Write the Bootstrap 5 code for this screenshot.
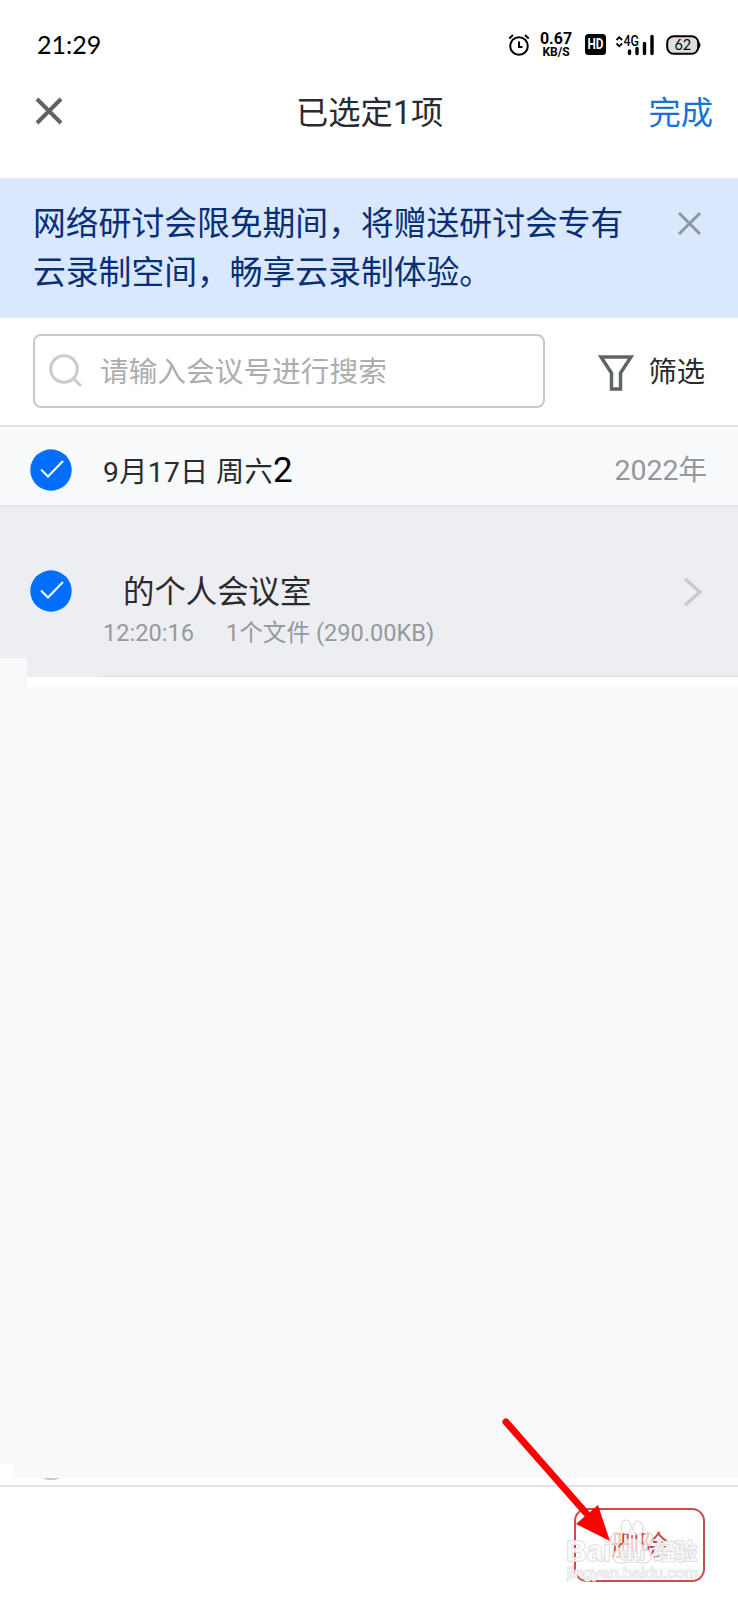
<!DOCTYPE html>
<html lang="zh-CN">
<head>
<meta charset="utf-8">
<meta name="viewport" content="width=device-width, initial-scale=1">
<title>已选定1项</title>
<link href="https://cdn.jsdelivr.net/npm/bootstrap@5.3.0/dist/css/bootstrap.min.css" rel="stylesheet">
<style>
body{font-family:Roboto,"Noto Sans CJK SC",sans-serif;font-weight:400;color:#2a2b2e;background:#fff}
svg{display:block;flex-shrink:0}
.screen{height:1600px;overflow:hidden}
.statusbar{height:90px;padding:0 36px 0 37px;color:#000}
.clock{font-family:Lato,sans-serif;font-size:25px;line-height:30px;margin-top:-2px}
.rate{font-weight:700;width:36px}
.rate-num{font-size:16px;line-height:14px}
.rate-unit{font-size:12px;line-height:12px}
.hd-mark{margin-left:11px}
.signal{margin-left:9px}
.battery{margin-left:11px}
.titlebar{height:88px;padding:0 25px 42px 35px;font-size:32.3px;line-height:46px}
.title-text{margin-left:28px;padding-top:1px}
.done{color:#1473d4}
.close-main{margin-top:-4px}
.notice{height:140px;background:#d9e8fc;color:#062f78;padding:22px 24px 0 33px;font-size:32.8px;line-height:49px}
.close-note{margin:11px 12px 0 0}
.searchrow{height:109px;padding:16px 33px 0 33px;border-bottom:2px solid #dfe1e5}
.searchbox{width:512px;height:74px;border:2px solid #c9c9c9;border-radius:8px;padding:0 14px;color:#adadad;font-size:28.7px;line-height:40px}
.searchbox span{margin-left:16px;padding-top:2px}
.filter{font-size:28.3px;line-height:40px;height:74px;padding-top:4px}
.filter span{margin-left:14px}
.daterow{height:80px;background:#f8f9fb;border-bottom:2px solid #e2e4e8;padding:13px 31px 0 30px;font-size:28.2px;line-height:40px}
.tick{margin-top:-4px}
.row-text{margin-left:30px}
.date-text{margin-left:31px;letter-spacing:.35px;padding-top:1px}
.year{font-size:28.5px;color:#95979b;margin-top:-3px}
.extra{font-size:35px;line-height:36px;color:#000}
.item{height:170px;background:#edeef2}
.item-body{height:169px;padding:63px 35px 0 30px}
.item-title{font-size:31.4px;line-height:46px;padding-left:21px}
.item-sub{font-size:23.6px;line-height:35px;color:#96989d;gap:32px;padding-left:1px}
.item-rule{height:1px;margin-left:102px;background:#d9dadd}
.chevron{margin-top:7px}
.edge-patch{left:0;top:151px;width:27px;height:29px;background:#f8f9fb}
.gapstrip{height:10px}
.emptyarea{height:792px;background:#f8f9fb}
.corner{width:13px;height:14px;background:#fff}
.peek{height:7px;padding-left:41px}
.footbar{border-top:2px solid #dfe2e7;padding:21px 33px 0 0;height:115px}
.delete{width:131px;height:74px;border:2px solid #cf4b48;border-radius:13px;color:#cf4440;font-size:28.5px;line-height:40px;background:#fff}
.delete span{display:block;padding-top:4px}
.arrow{left:496px;top:1412px}
.stamp{left:560px;top:1508px}
.stamp text{font-family:"Liberation Sans","Noto Sans CJK SC",sans-serif;font-weight:700;fill:#fff;fill-opacity:.72;stroke:#dcdcdc;stroke-width:1.6;paint-order:stroke}
.stamp .site{font-weight:400;stroke-width:1.2}
</style>
</head>
<body>
<div class="screen position-relative d-flex flex-column">
  <header class="statusbar d-flex align-items-center justify-content-between">
    <div class="clock">21:29</div>
    <div class="d-flex align-items-center">
      <svg width="22" height="24" viewBox="0 0 22 24" fill="none" stroke="#000" stroke-width="2"><circle cx="11" cy="13" r="8.8"/><path d="M1.300 5.500 5 2M20.700 5.500 17 2M11 8.500V14h3.500"/></svg>
      <div class="rate text-center ms-2"><div class="rate-num">0.67</div><div class="rate-unit">KB/S</div></div>
      <svg class="hd-mark" width="21" height="21" viewBox="0 0 21 21"><rect width="21" height="21" rx="3.5"/><text x="10.5" y="15.4" text-anchor="middle" textLength="16" lengthAdjust="spacingAndGlyphs" font-size="14" font-weight="700" fill="#fff">HD</text></svg>
      <svg class="signal" width="40" height="22" viewBox="0 0 40 22"><path d="M1.500 6 4.300 3.200 7.100 6M1.500 9.500l2.800 2.800 2.800-2.800" fill="none" stroke="#000" stroke-width="1.800"/><text x="8.500" y="11.500" font-size="14" font-weight="500" textLength="15.500" lengthAdjust="spacingAndGlyphs">4G</text><path d="M14.500 17v2.500M22 14.500v5M29.500 9.500v10M37 2.500v17" stroke="#000" stroke-width="3.400" stroke-linecap="round"/></svg>
      <svg class="battery" width="36" height="20" viewBox="0 0 36 20"><rect x="1.200" y="1.200" width="31" height="17.600" rx="6.500" fill="#dedede" stroke="#000" stroke-width="2"/><path d="M33 6.500q3 3.500 0 7z"/><text x="16.800" y="15" text-anchor="middle" font-size="14.500" font-family="Lato">62</text></svg>
    </div>
  </header>
  <nav class="titlebar d-flex align-items-center justify-content-between">
    <svg class="close-main" width="28" height="28" viewBox="0 0 28 28" stroke="#606266" stroke-width="4"><path d="M2 2l24 24M26 2 2 26"/></svg>
    <div class="title-text">已选定1项</div>
    <div class="done">完成</div>
  </nav>
  <section class="notice d-flex justify-content-between">
    <div>网络研讨会限免期间，将赠送研讨会专有<br>云录制空间，畅享云录制体验。</div>
    <svg class="close-note" width="25" height="25" viewBox="0 0 25 25" stroke="#8f969f" stroke-width="3"><path d="M2 2l21 21M23 2 2 23"/></svg>
  </section>
  <section class="searchrow d-flex justify-content-between">
    <div class="searchbox d-flex align-items-center">
      <svg width="35" height="35" viewBox="0 0 35 35" fill="none" stroke="#c9cbca" stroke-width="3"><circle cx="15" cy="16" r="13.300"/><path d="m24 25 8 8"/></svg>
      <span>请输入会议号进行搜索</span>
    </div>
    <div class="filter d-flex align-items-center">
      <svg width="36" height="36" viewBox="0 0 36 36" fill="none" stroke="#606367" stroke-width="3.500"><path d="M3 2h30L22.500 18v16h-9V18Z"/></svg>
      <span>筛选</span>
    </div>
  </section>
  <section class="daterow d-flex align-items-center">
    <svg class="tick" width="42" height="42" viewBox="0 0 42 42"><circle cx="21" cy="21" r="20.700" fill="#006fff"/><path d="m11 20.500 7 7L33 12" fill="none" stroke="#fff" stroke-width="2"/></svg>
    <div class="date-text">9月17日 周六<span class="extra">2</span></div>
    <div class="year ms-auto">2022年</div>
  </section>
  <section class="item position-relative">
    <div class="item-body d-flex align-items-start">
      <svg width="42" height="42" viewBox="0 0 42 42"><circle cx="21" cy="21" r="20.700" fill="#006fff"/><path d="m11 20.500 7 7L33 12" fill="none" stroke="#fff" stroke-width="2"/></svg>
      <div class="row-text">
        <div class="item-title">的个人会议室</div>
        <div class="item-sub d-flex"><span>12:20:16</span><span>1个文件 (290.00KB)</span></div>
      </div>
      <svg class="chevron ms-auto" width="20" height="30" viewBox="0 0 20 30" fill="none" stroke="#c6c7ca" stroke-width="3"><path d="m2 2 15 13L2 28"/></svg>
    </div>
    <div class="item-rule"></div>
    <div class="edge-patch position-absolute"></div>
  </section>
  <div class="gapstrip"></div>
  <main class="emptyarea d-flex align-items-end"><div class="corner"></div></main>
  <div class="peek"><svg width="20" height="3" viewBox="0 0 20 3"><path d="M1 0h18q-9 4.500-18 0" fill="#c9cbca"/></svg></div>
  <footer class="footbar d-flex justify-content-end align-items-start">
    <button class="delete p-0"><span>删除</span></button>
  </footer>
  <svg class="stamp position-absolute" width="145" height="80" viewBox="0 0 145 80">
    <g fill="#fff" fill-opacity=".7" stroke="#dcdcdc" stroke-width="1.200"><ellipse cx="66" cy="19" rx="5" ry="7"/><ellipse cx="78" cy="20" rx="5" ry="7"/><ellipse cx="56" cy="31" rx="5" ry="6.500"/><ellipse cx="88" cy="31" rx="5" ry="6.500"/><path d="M72 30c-7 0-8 8-15 12-7 6-3 13 4 13 5 0 7-1 11-1s7 1 12 1c7 0 11-8 4-13-7-4-9-12-16-12Z"/></g>
    <text x="6" y="53" font-size="30" textLength="45" lengthAdjust="spacingAndGlyphs">Bai</text>
    <text x="60" y="52" font-size="17" textLength="25" lengthAdjust="spacingAndGlyphs">du</text>
    <text x="94" y="51" font-size="22" textLength="43">经验</text>
    <text class="site" x="7" y="70" font-size="15" textLength="131" lengthAdjust="spacingAndGlyphs">jingyan.baidu.com</text>
  </svg>
  <svg class="arrow position-absolute" width="120" height="135" viewBox="0 0 120 135"><path d="M10 10 90 101" stroke="#f00" stroke-width="7" stroke-linecap="round"/><path d="m102 93-22 19 34 17Z" fill="#f00"/></svg>
</div>
<script src="https://cdn.jsdelivr.net/npm/bootstrap@5.3.0/dist/js/bootstrap.bundle.min.js"></script>
</body>
</html>
